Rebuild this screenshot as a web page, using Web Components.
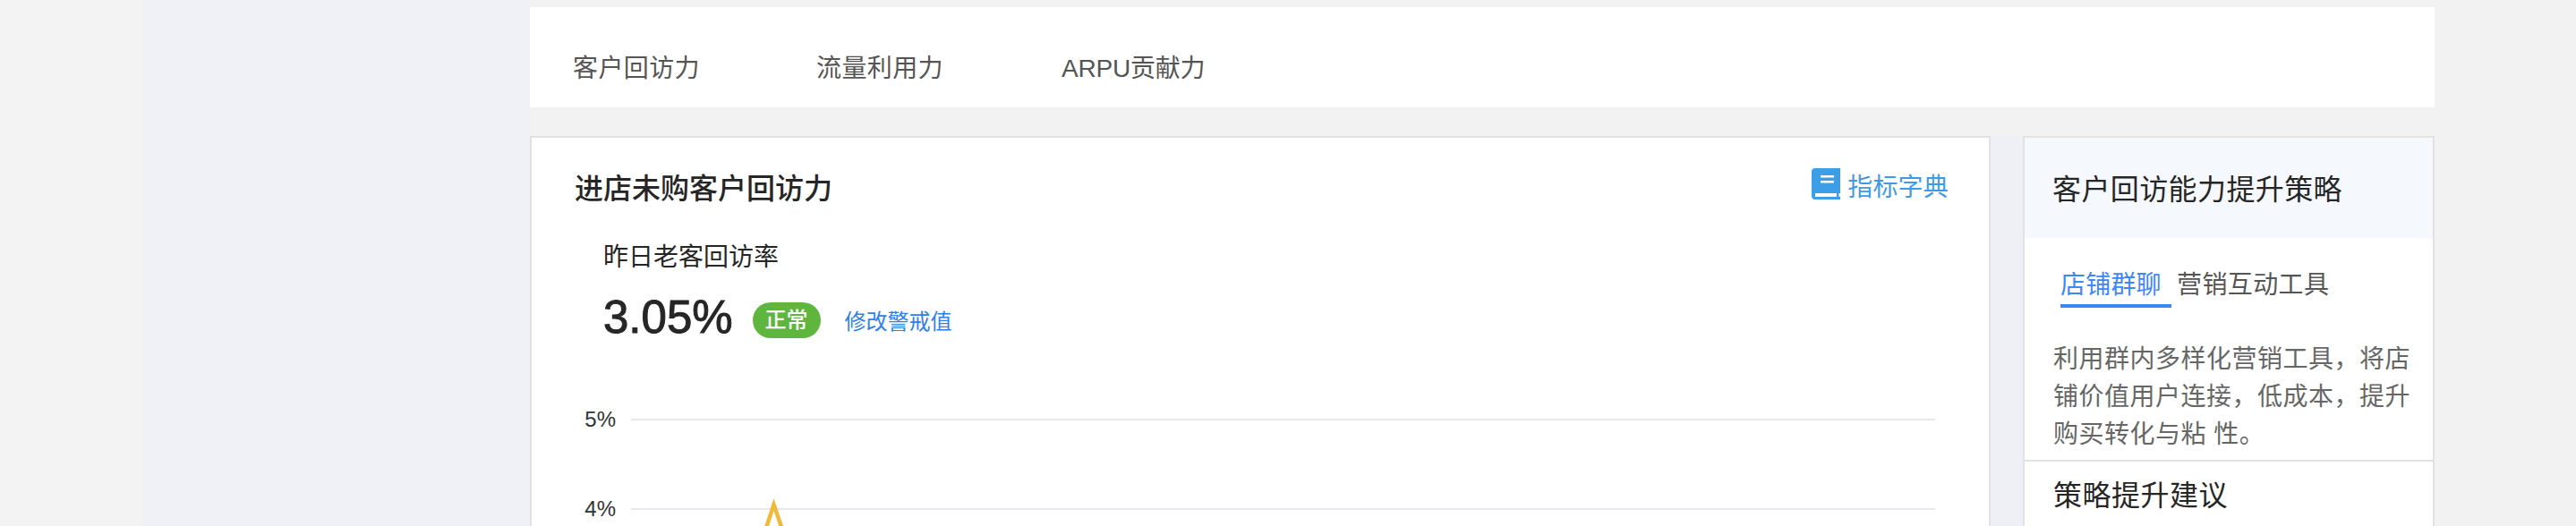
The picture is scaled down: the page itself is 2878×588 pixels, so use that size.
<!DOCTYPE html>
<html lang="zh">
<head>
<meta charset="utf-8">
<title>客户回访力</title>
<style>
    html, body { margin: 0; height: 100%; overflow: hidden; background: #f2f2f2; }
    body { font-family: "Liberation Sans", "Noto Sans CJK SC", sans-serif; }
</style>
</head>
<body>
<app-shell>
    <tab-bar></tab-bar>
    <visit-card slot="left"></visit-card>
    <strategy-panel slot="right"></strategy-panel>
</app-shell>

<script>
class AppShell extends HTMLElement {
    constructor() {
        super();
        this.shadow = this.attachShadow({ mode: "open" });
    }

    connectedCallback() {
        this.shadow.innerHTML = `
            <style>
                :host {
                    display: grid;
                    grid-template-columns: 160px 432px 2128px 1fr;
                    height: 588px;
                    overflow: hidden;
                    background: #f2f2f2;
                }
                .rail { background: #f3f3f3; }
                .side { background: #eff1f6; }
                .main { padding-top: 8px; min-width: 0; }
                .row {
                    display: flex;
                    gap: 36px;
                    margin-top: 32px;
                    background: #eff0f5;
                    height: 436px;
                }
            </style>
            <div class="rail"></div>
            <div class="side"></div>
            <div class="main">
                <slot></slot>
                <div class="row">
                    <slot name="left"></slot>
                    <slot name="right"></slot>
                </div>
            </div>
            <div class="rest"></div>
        `;
    }
}

class TabBar extends HTMLElement {
    constructor() {
        super();
        this.shadow = this.attachShadow({ mode: "open" });
    }

    connectedCallback() {
        this.shadow.innerHTML = `
            <style>
                :host {
                    display: flex;
                    box-sizing: border-box;
                    height: 112px;
                    padding: 49px 0 0 48px;
                    gap: 130px;
                    background: #fff;
                    color: #555;
                    font-size: 28px;
                    line-height: 40px;
                    letter-spacing: 0.4px;
                }
                .last { margin-left: 2px; letter-spacing: -0.2px; }
            </style>
            <span>客户回访力</span>
            <span>流量利用力</span>
            <span class="last">ARPU贡献力</span>
        `;
    }
}

class VisitCard extends HTMLElement {
    constructor() {
        super();
        this.shadow = this.attachShadow({ mode: "open" });
    }

    connectedCallback() {
        this.shadow.innerHTML = `
            <style>
                :host {
                    display: block;
                    box-sizing: border-box;
                    width: 1632px;
                    height: 436px;
                    border: 2px solid #e2e2e2;
                    border-bottom: 0;
                    background: #fff;
                    color: #262626;
                    overflow: hidden;
                }
                .head {
                    display: flex;
                    justify-content: space-between;
                    height: 44px;
                    padding: 34px 45px 0 48px;
                }
                h2 {
                    margin: 1px 0 0;
                    font-size: 32px;
                    font-weight: 500;
                    line-height: 44px;
                }
                .dict {
                    display: flex;
                    align-items: flex-start;
                    gap: 8px;
                    color: #3d9be6;
                    font-size: 28px;
                    line-height: 40px;
                    letter-spacing: 0.2px;
                }
                .dict svg { display: block; }
                .dict span { padding-top: 2px; }
                .label {
                    margin: 36px 0 0 80px;
                    font-size: 28px;
                    line-height: 40px;
                }
                .metric {
                    display: flex;
                    align-items: center;
                    height: 48px;
                    margin: 23px 0 0 80px;
                }
                .value {
                    font-size: 51px;
                    line-height: 48px;
                    -webkit-text-stroke: 1px #262626;
                }
                .badge {
                    width: 76px;
                    height: 40px;
                    margin: 6px 27px 0 22px;
                    border-radius: 20px;
                    background: #5fb63e;
                    color: #fff;
                    font-size: 24px;
                    font-weight: 500;
                    line-height: 40px;
                    text-align: center;
                }
                .link {
                    margin-top: 4px;
                    color: #2f80ed;
                    font-size: 24px;
                }
                trend-chart { margin-top: 60px; }
            </style>
            <div class="head">
                <h2>进店未购客户回访力</h2>
                <div class="dict">
                    <svg width="32" height="36" viewBox="0 0 32 36">
                        <path fill="#3d9ee8" d="M4 0H32V28H30.500V32H32V35H4A4 4 0 0 1 0 31V4A4 4 0 0 1 4 0Z"/>
                        <path fill="#fff" d="M10 8H25V10.500H10ZM10 14H25V16.500H10ZM4 28H28V32H4Z"/>
                    </svg>
                    <span>指标字典</span>
                </div>
            </div>
            <div class="label">昨日老客回访率</div>
            <div class="metric">
                <span class="value">3.05%</span>
                <span class="badge">正常</span>
                <span class="link">修改警戒值</span>
            </div>
            <trend-chart></trend-chart>
        `;
    }
}

class TrendChart extends HTMLElement {
    constructor() {
        super();
        this.shadow = this.attachShadow({ mode: "open" });
    }

    connectedCallback() {
        this.shadow.innerHTML = `
            <style>
                :host { display: block; height: 200px; }
                svg { display: block; }
                text {
                    fill: #333;
                    font-family: "Liberation Sans", sans-serif;
                    font-size: 24px;
                    text-anchor: end;
                }
                line { stroke: #e8e8ee; stroke-width: 2; }
            </style>
            <svg width="1628" height="200" viewBox="0 0 1628 200">
                <text x="94" y="38">5%</text>
                <line x1="111" y1="30" x2="1568" y2="30"/>
                <text x="94" y="138">4%</text>
                <line x1="111" y1="130" x2="1568" y2="130"/>
                <polyline points="251,185 270.500,125 291,185" fill="none" stroke="#f0b93a" stroke-width="4.500"/>
            </svg>
        `;
    }
}

class StrategyPanel extends HTMLElement {
    constructor() {
        super();
        this.shadow = this.attachShadow({ mode: "open" });
    }

    connectedCallback() {
        this.shadow.innerHTML = `
            <style>
                :host {
                    display: block;
                    box-sizing: border-box;
                    width: 460px;
                    height: 436px;
                    border: 2px solid #e2e2e2;
                    border-bottom: 0;
                    background: #fff;
                    overflow: hidden;
                }
                .head {
                    box-sizing: border-box;
                    height: 112px;
                    padding: 36px 0 0 31px;
                    background: #f5f8fd;
                    color: #262626;
                    font-size: 32px;
                    line-height: 44px;
                    letter-spacing: 0.4px;
                }
                .tabs {
                    display: flex;
                    gap: 6px;
                    padding: 33px 0 0 40px;
                    font-size: 28px;
                    line-height: 40px;
                    color: #555;
                    letter-spacing: 0.4px;
                }
                .tab.on {
                    width: 124px;
                    height: 41px;
                    color: #3d87f5;
                    border-bottom: 4px solid #3d87f5;
                    letter-spacing: 0.2px;
                }
                p {
                    width: 404px;
                    height: 126px;
                    margin: 37px 0 0 32px;
                    color: #666;
                    font-size: 28px;
                    line-height: 42px;
                    letter-spacing: 0.5px;
                }
                .tips {
                    margin-top: 7px;
                    padding: 16px 0 0 32px;
                    border-top: 2px solid #e2e2e2;
                    color: #262626;
                    font-size: 32px;
                    line-height: 44px;
                    letter-spacing: 0.5px;
                }
            </style>
            <div class="head">客户回访能力提升策略</div>
            <div class="tabs">
                <span class="tab on">店铺群聊</span>
                <span class="tab">营销互动工具</span>
            </div>
            <p>利用群内多样化营销工具，将店铺价值用户连接，低成本，提升购买转化与粘 性。</p>
            <div class="tips">策略提升建议</div>
        `;
    }
}

customElements.define("app-shell", AppShell);
customElements.define("tab-bar", TabBar);
customElements.define("visit-card", VisitCard);
customElements.define("trend-chart", TrendChart);
customElements.define("strategy-panel", StrategyPanel);
</script>
</body>
</html>
